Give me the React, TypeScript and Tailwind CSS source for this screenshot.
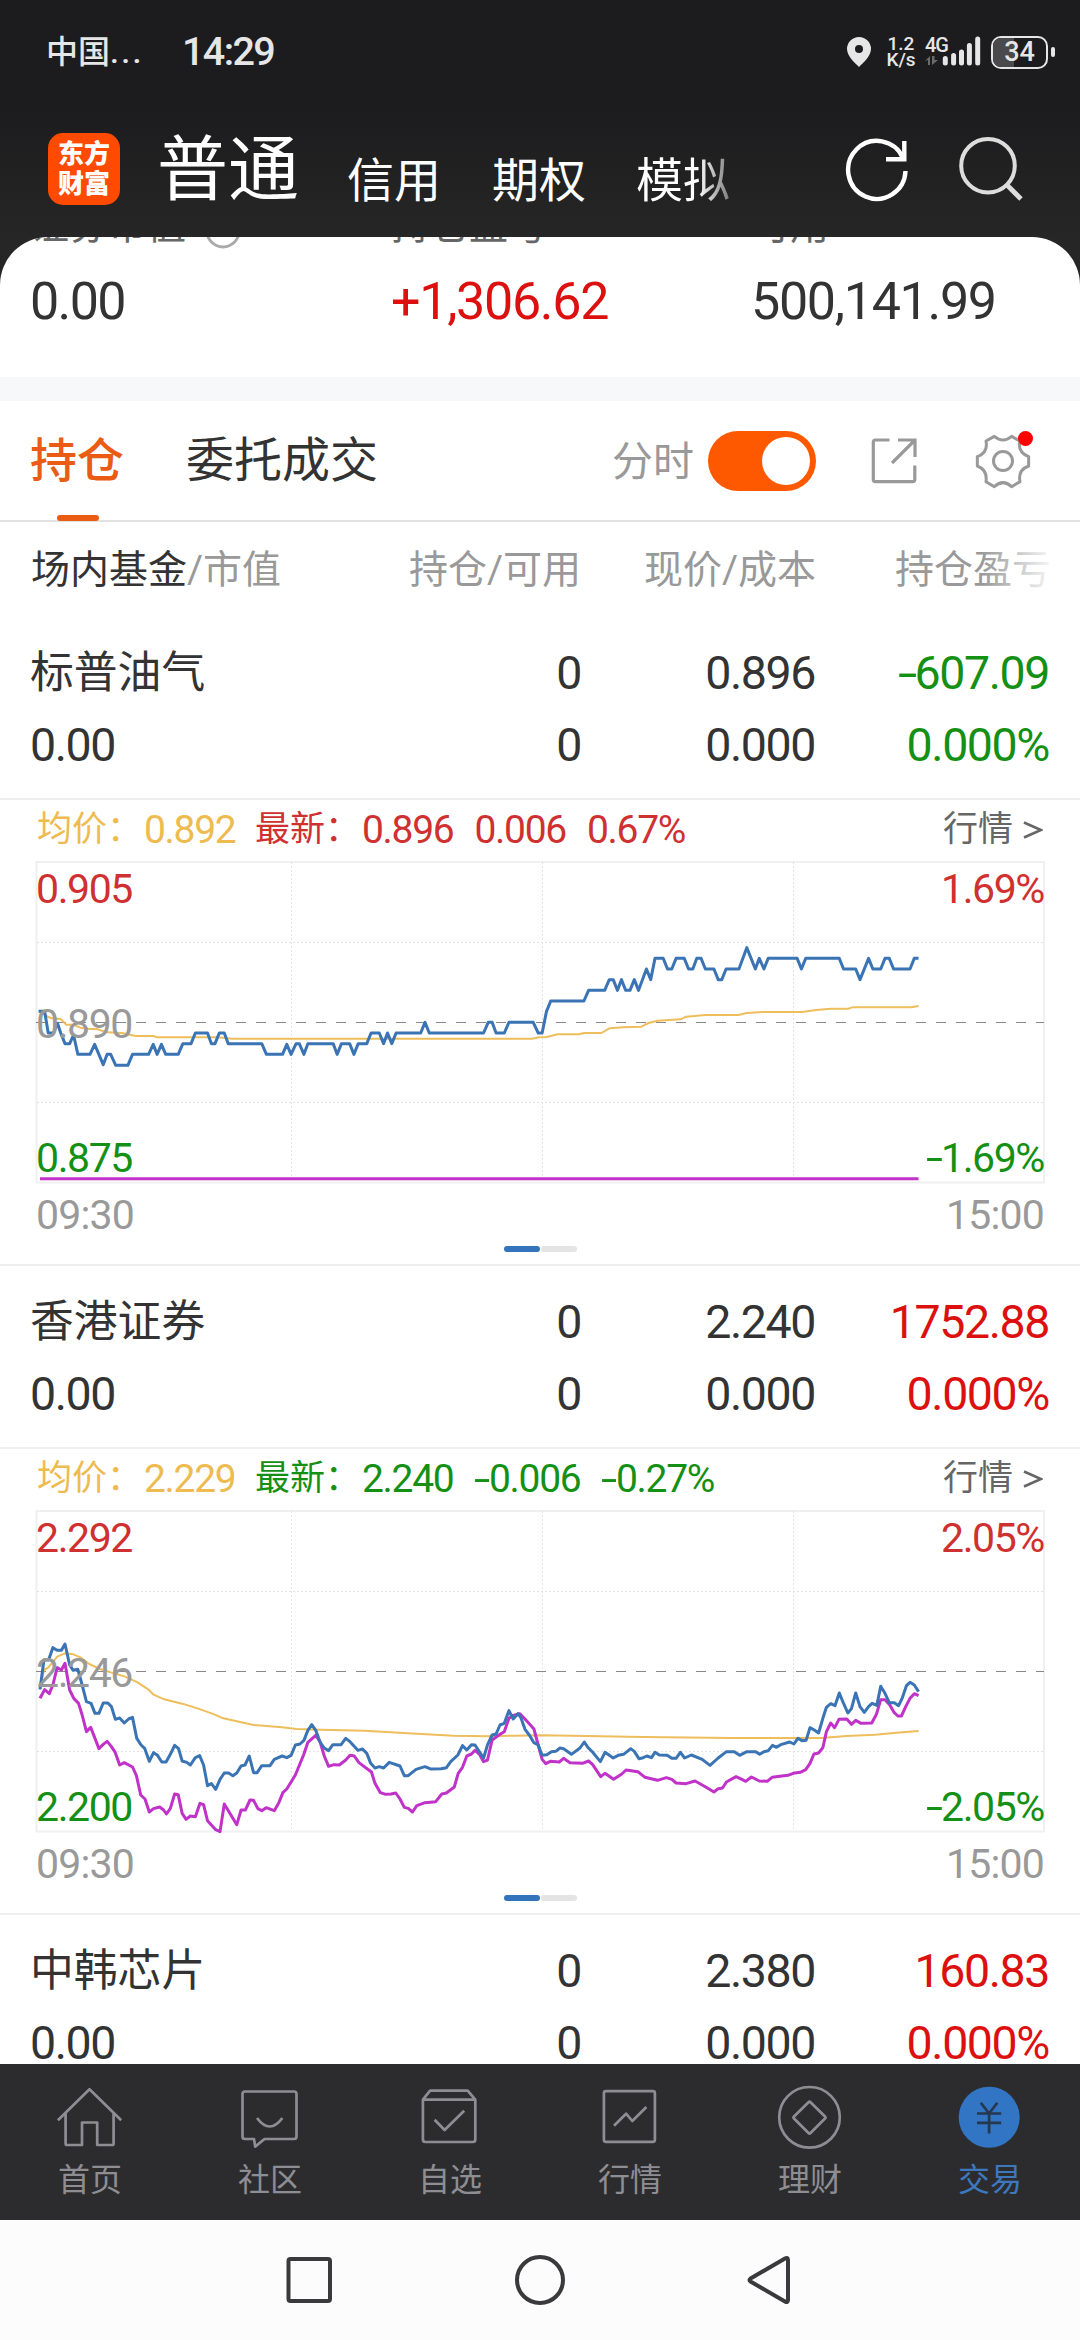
import React from "react";

type Series = { price: string; average: string; index: string };

const SERIES_A: Series = {
  price:
    "108,514 125,514 135,579 150,579 161,550 170,579 182,611 195,611 206,585 218,643 252,643 265,613 289,674 300,643 310,643 324,676 358,676 371,643 416,643 429,613 440,643 452,613 464,643 499,643 512,611 535,611 547,579 581,579 592,611 602,611 614,579 628,579 639,611 733,611 746,643 791,643 803,613 815,643 829,611 838,611 851,643 862,611 933,611 944,643 956,611 979,611 991,643 1003,611 1027,611 1039,579 1062,579 1074,611 1085,579 1097,611 1109,579 1178,579 1190,547 1202,579 1354,579 1367,547 1378,547 1389,579 1412,579 1425,547 1493,547 1507,579 1518,579 1530,515 1542,483 1635,483 1648,451 1693,451 1706,419 1717,419 1729,451 1740,419 1752,451 1764,451 1776,419 1788,451 1810,387 1822,419 1834,355 1857,355 1869,387 1881,387 1893,355 1916,355 1928,387 1940,387 1951,355 1963,355 1975,387 1999,387 2011,419 2021,419 2033,387 2069,387 2091,323 2115,387 2126,355 2139,387 2151,355 2232,355 2244,387 2256,355 2350,355 2362,387 2396,387 2408,419 2432,355 2444,387 2466,387 2478,355 2490,355 2502,387 2548,387 2560,355 2572,355",
  average:
    "112,514 130,528 145,535 170,537 185,554 205,554 225,563 250,567 270,567 300,577 340,579 380,588 430,588 440,592 610,592 650,596 1490,596 1510,592 1531,591 1561,583 1621,583 1636,579 1684,579 1706,565 1746,562 1796,560 1816,549 1841,542 1906,538 1921,530 1976,525 2068,525 2091,519 2136,516 2246,516 2286,510 2326,506 2376,506 2386,502 2551,502 2572,498",
  index: "112,1016 2572,1016",
};

const SERIES_B: Series = {
  price:
    "112,601 123,513 136,513 148,476 160,484 172,484 182,465 195,528 205,544 218,541 230,588 242,638 255,643 266,673 277,673 289,642 302,642 312,653 323,691 335,687 348,702 360,690 371,685 383,748 395,768 405,778 418,817 430,791 441,799 453,819 465,819 477,796 489,769 500,779 510,816 523,820 533,828 547,806 559,800 570,828 581,890 592,884 604,901 616,871 628,852 640,852 652,860 663,852 675,831 686,828 698,801 710,851 720,851 733,830 756,830 768,811 790,801 803,806 815,799 827,768 840,765 851,754 862,724 873,707 884,724 896,759 908,777 920,785 932,767 955,767 968,748 980,758 1002,784 1015,780 1027,793 1038,823 1050,837 1062,833 1074,837 1090,820 1120,831 1132,860 1143,860 1165,841 1190,833 1205,840 1235,839 1250,836 1262,818 1282,798 1295,770 1307,783 1320,767 1330,768 1342,788 1354,807 1365,768 1378,738 1389,735 1400,708 1412,703 1425,665 1437,690 1450,674 1458,685 1470,721 1482,738 1495,761 1507,768 1518,799 1531,797 1544,788 1556,787 1568,777 1578,779 1600,796 1624,777 1636,759 1646,775 1659,789 1681,818 1694,790 1717,807 1731,799 1746,796 1766,779 1776,787 1789,809 1801,806 1811,801 1824,806 1834,790 1846,798 1868,799 1881,808 1893,808 1905,790 1917,807 1936,798 1966,811 1988,829 2011,807 2034,788 2056,788 2071,799 2091,788 2116,788 2127,796 2139,788 2151,785 2163,769 2174,775 2186,767 2211,759 2223,765 2234,748 2246,755 2257,754 2268,716 2280,723 2292,732 2304,688 2314,655 2326,644 2338,650 2350,612 2361,641 2374,672 2384,659 2396,612 2408,653 2420,670 2432,653 2442,643 2455,649 2466,592 2478,613 2490,641 2504,641 2516,650 2526,628 2538,590 2548,580 2560,588 2572,608",
  average:
    "112,601 123,543 135,536 145,523 160,503 182,493 205,496 225,505 250,525 280,540 310,550 350,563 385,580 415,601 430,617 460,631 510,644 555,659 600,676 625,688 710,708 790,715 830,720 900,722 1020,725 1130,732 1270,740 1360,742 1440,740 1518,739 1640,741 1800,744 2050,747 2300,747 2370,741 2450,737 2510,731 2572,726",
  index:
    "112,628 125,602 138,614 148,588 160,536 172,543 182,523 195,603 207,629 220,643 230,678 242,728 254,715 266,748 277,779 289,766 300,757 312,773 323,791 335,828 348,821 371,834 382,860 394,918 406,930 418,969 430,959 447,954 458,963 466,975 477,958 489,915 499,917 510,973 521,991 533,981 547,983 560,943 570,947 581,995 604,1022 616,1028 628,945 663,1007 675,963 687,963 700,933 710,934 722,959 733,965 745,956 768,965 780,943 792,911 803,900 827,858 850,798 862,760 884,739 896,758 908,801 920,832 935,827 950,828 968,813 980,799 992,801 1005,821 1040,849 1050,883 1065,911 1080,916 1095,915 1108,912 1120,930 1132,955 1143,958 1155,969 1167,950 1190,941 1220,938 1237,915 1250,912 1272,894 1283,853 1295,835 1307,801 1320,795 1330,784 1342,795 1354,818 1365,813 1378,753 1400,736 1412,728 1425,688 1437,679 1455,674 1470,690 1495,720 1507,768 1518,811 1528,824 1541,817 1566,819 1578,808 1596,821 1631,823 1648,816 1659,826 1682,863 1694,853 1718,871 1741,855 1753,843 1786,848 1806,865 1841,874 1866,866 1881,871 1893,882 1921,884 1946,876 1976,894 1999,909 2011,899 2023,897 2034,879 2061,863 2073,869 2088,877 2104,864 2126,876 2148,877 2162,865 2206,859 2221,853 2241,850 2256,842 2268,823 2279,795 2292,792 2304,776 2314,728 2326,702 2337,716 2349,691 2371,690 2384,706 2396,694 2411,703 2441,702 2454,676 2466,632 2478,632 2491,647 2504,671 2514,681 2524,681 2536,653 2548,628 2560,614 2572,620",
};

function Line({ points, color, width }: { points: string; color: string; width: number }) {
  return (
    <polyline
      points={points}
      fill="none"
      stroke={color}
      strokeWidth={width}
      strokeLinejoin="round"
      vectorEffect="non-scaling-stroke"
    />
  );
}

/* A signed figure; the minus sign is widened so that it reads clearly beside the digits. */
function Num({ children }: { children: string }) {
  if (!children.startsWith("-")) return <span>{children}</span>;
  return (
    <span>
      <span className="mr-[5px] inline-block origin-left scale-x-150">-</span>
      {children.slice(1)}
    </span>
  );
}

function StatusBar() {
  return (
    <div className="flex h-[104px] items-center justify-between pl-[46px] pr-[25px] text-[#e6e6e6]">
      <div className="flex items-center">
        <span className="w-[136px] text-[32px] font-medium leading-none">
          中国<span className="tracking-[2.4px]">...</span>
        </span>
        <span className="text-[39.500px] font-medium leading-none tracking-[-1.6px]">14:29</span>
      </div>
      <div className="flex items-center">
        <svg width="24" height="30" viewBox="0 0 24 30" fill="#e6e6e6">
          <path fillRule="evenodd" d="M12 0a12 12 0 0 1 12 12c0 7-8 14-12 18C8 26 0 19 0 12A12 12 0 0 1 12 0zm0 8a4 4 0 1 0 0 8 4 4 0 0 0 0-8z" />
        </svg>
        <div className="ml-[15px] flex w-[30px] flex-col items-center text-[19px] font-medium leading-[16px]">
          <span>1.2</span>
          <span>K/s</span>
        </div>
        <div className="relative ml-[9px] h-[34px] w-[56px]">
          <span className="absolute left-0 top-0 text-[20px] font-medium leading-[20px] tracking-[-1px]">4G</span>
          <svg className="absolute left-0 top-0" width="56" height="34" viewBox="0 0 56 34">
            <path d="M0 26l5-5v9H3v-5zM7 21v9l6-5H9.500v-4z" fill="#6b6b6b" />
            <g stroke="#e6e6e6" strokeWidth="5" strokeLinecap="round">
              <path d="M20.300 23.500V28M28.600 20.500V28M36.500 17V28M44.400 10.500V28M52.700 4V28" />
            </g>
          </svg>
        </div>
        <div className="relative ml-[10px] flex h-[33px] w-[57px] items-center justify-center overflow-hidden rounded-[10px] border-2 border-[#e6e6e6]">
          <div className="absolute inset-y-0 left-0 w-[21px] bg-[#4a4a4c]" />
          <span className="relative text-[27px] font-medium leading-none">34</span>
        </div>
        <div className="ml-[3px] h-[10px] w-1 rounded-full bg-[#e6e6e6]" />
      </div>
    </div>
  );
}

function TitleBar() {
  return (
    <div className="flex h-[133px] items-start pl-12 text-white">
      <div className="mt-[29px] flex h-[72px] w-[72px] flex-col items-center justify-center rounded-[15px] bg-[#ff4a00] text-[26px] font-black leading-[30px]">
        <span>东方</span>
        <span>财富</span>
      </div>
      <span className="ml-[37px] mt-[30px] w-[190px] text-[71px] leading-[72px]">普通</span>
      <span className="mt-[53px] w-[145px] text-[47px] leading-[48px]">信用</span>
      <span className="mt-[53px] w-[144px] text-[47px] leading-[48px]">期权</span>
      <span className="mt-[53px] w-[207px] bg-gradient-to-r from-white from-[30%] to-[#777777] to-[46%] bg-clip-text text-[47px] leading-[48px] text-transparent">
        模拟
      </span>
      <svg className="mt-[32px]" width="68" height="68" viewBox="842 136 68 68" fill="none" stroke="#ffffff" strokeWidth="4.400">
        <path d="M904.500 171A28.700 29 0 1 1 902 158M903.300 141V159.300H885" />
      </svg>
      <svg className="ml-[46px] mt-[30px]" width="68" height="68" viewBox="956 134 68 68" fill="none" stroke="#dddddd" strokeWidth="4">
        <circle cx="987" cy="165.700" r="26.800" />
        <path d="M1005.500 184.500l14.500 14.500" strokeWidth="4.800" />
      </svg>
    </div>
  );
}

function Summary() {
  return (
    <div className="flex h-[140px] shrink-0 pl-[30px]">
      <div className="w-[361px]">
        <div className="-mt-[31px] flex h-10 items-center text-[39px] leading-10 text-[#666666]">
          证券市值
          <svg className="ml-[19px] mt-[10px]" width="36" height="36" viewBox="0 0 36 36" fill="none" stroke="#aaaaaa" strokeWidth="3">
            <circle cx="18" cy="18" r="16" />
            <path d="M18 9v13" />
          </svg>
        </div>
        <div className="mt-[32px] text-[52px] leading-[48px] tracking-[-1.6px]">0.00</div>
      </div>
      <div className="w-[360px]">
        <div className="-mt-[31px] flex h-10 items-center text-[39px] leading-10 text-[#666666]">
          持仓盈亏
          <svg className="ml-[8px]" width="12" height="24" viewBox="0 0 12 24" fill="none" stroke="#999999" strokeWidth="3">
            <path d="M1 2l9 10-9 10" />
          </svg>
        </div>
        <div className="mt-[32px] text-[52px] leading-[48px] tracking-[-1.3px] text-[#dd1010]">+1,306.62</div>
      </div>
      <div>
        <div className="-mt-[31px] h-10 text-[39px] leading-10 text-[#666666]">可用</div>
        <div className="mt-[32px] text-[52px] leading-[48px] tracking-[-1.3px]">500,141.99</div>
      </div>
    </div>
  );
}

function Toolbar() {
  return (
    <div className="flex h-[121px] shrink-0 items-start border-b-2 border-[#e2e2e2] pl-[30px]">
      <div className="flex h-[120px] w-[156px] flex-col">
        <span className="mt-[36px] h-[78px] text-[47px] font-medium leading-[48px] text-[#ea5b14]">持仓</span>
        <span className="ml-[27px] h-[6px] w-[42px] rounded-full bg-[#ea5b14]" />
      </div>
      <span className="mt-[36px] w-[426px] text-[48px] leading-[48px]">委托成交</span>
      <span className="mt-[37px] w-[96px] text-[41px] leading-[48px] text-[#999999]">分时</span>
      <div className="mt-[30px] flex h-[60px] w-[108px] items-center justify-end rounded-full bg-[#ff5900] pr-[6px]">
        <div className="h-12 w-12 rounded-full bg-white" />
      </div>
      <svg className="ml-[54px] mt-[34px]" width="50" height="52" viewBox="870 435 50 52" fill="none" stroke="#999999" strokeWidth="3.200">
        <path d="M889.500 440H875.500Q873.300 440 873.300 442.200V479.500Q873.300 481.700 875.500 481.700H912.500Q914.800 481.700 914.800 479.500V465.500" />
        <path d="M898 440H915V457M915 440L892 463" />
      </svg>
      <div className="relative ml-[53px] mt-[30px]">
        <svg width="60" height="60" viewBox="1116 93 180 180" fill="none" stroke="#999999" strokeWidth="9" strokeLinejoin="round">
          <path d="M1180 109Q1206 131 1232 109L1256 123Q1250 158 1283 170V198Q1250 210 1257 245L1232 260Q1206 236 1180 260L1155 245Q1160 210 1129 198V170Q1162 158 1155 123Z" />
          <circle cx="1206" cy="183" r="28.500" />
        </svg>
        <div className="absolute right-0 top-0 h-[15px] w-[15px] rounded-full bg-[#ff0000]" />
      </div>
    </div>
  );
}

function TableHead() {
  return (
    <div className="relative flex h-[95px] shrink-0 items-center whitespace-nowrap pl-[31px] pt-px text-[39px] text-[#999999]">
      <div className="w-[315px]">
        <span className="text-[#333333]">场内基金</span>/市值
      </div>
      <div className="w-[235px] text-right">持仓/可用</div>
      <div className="w-[235px] text-right">现价/成本</div>
      <div className="w-[235px] text-right">持仓盈亏</div>
      <div className="absolute inset-y-0 right-[30px] w-[68px] bg-gradient-to-r from-white/0 to-white/90" />
    </div>
  );
}

type Cell = { name: string; price: string; profit: string; up: boolean };

function Holding({ name, price, profit, up }: Cell) {
  const tone = up ? "w-[234px] text-right text-[#dd1010]" : "w-[234px] text-right text-[#149014]";
  return (
    <div className="flex h-[181px] shrink-0 flex-col pl-[30px] pt-[20px] text-[46.500px] leading-[72px] tracking-[-1.4px]">
      <div className="flex h-[72px]">
        <div className="w-[431px] text-[43.800px] tracking-normal">{name}</div>
        <div className="w-[120px] text-right">0</div>
        <div className="w-[234px] text-right">{price}</div>
        <div className={tone}>
          <Num>{profit}</Num>
        </div>
      </div>
      <div className="flex h-[72px]">
        <div className="w-[431px]">0.00</div>
        <div className="w-[120px] text-right">0</div>
        <div className="w-[234px] text-right">0.000</div>
        <div className={tone}>0.000%</div>
      </div>
    </div>
  );
}

type PanelProps = {
  average: string;
  latest: string[];
  up: boolean;
  high: string;
  middle: string;
  low: string;
  percent: string;
  series: Series;
};

function ChartPanel({ average, latest, up, high, middle, low, percent, series }: PanelProps) {
  const tone = up ? "flex gap-[21px] text-[#cf3030]" : "flex gap-[21px] text-[#149014]";
  const labelTone = up ? "w-[107px] text-[35px] tracking-normal text-[#cf3030]" : "w-[107px] text-[35px] tracking-normal text-[#149014]";
  return (
    <div className="h-[468px] shrink-0 border-y-2 border-[#eeeeee]">
      <div className="flex h-[60px] items-center pl-[37px] pr-[37px] text-[39px] tracking-[-1.3px]">
        <span className="w-[107px] text-[35px] tracking-normal text-[#eebb50]">均价：</span>
        <span className="w-[111px] text-[#eebb50]">{average}</span>
        <span className={labelTone}>最新：</span>
        <div className={tone}>
          {latest.map((v) => (
            <Num key={v}>{v}</Num>
          ))}
        </div>
        <span className="ml-auto flex items-center gap-[10px] text-[35px] tracking-normal text-[#666666]">
          行情
          <svg width="20" height="20" viewBox="0 0 20 20" fill="none" stroke="#666666" strokeWidth="2.600">
            <path d="M1 2.500L18 10L1 17.500" />
          </svg>
        </span>
      </div>
      <div className="relative h-[325px]">
        <svg className="block" width="1080" height="325" viewBox="0 0 1080 325" fill="none">
          <rect x="36.500" y="2" width="1007.500" height="320.500" stroke="#f0f0f0" strokeWidth="2" />
          <path d="M37 82.500H1044M37 242.500H1044M291.500 2V322M542.500 2V322M793.500 2V322" stroke="#e3e3e3" strokeWidth="1" strokeDasharray="2 2" />
          <path d="M36 162.500H1044" stroke="#888888" strokeWidth="1.200" strokeDasharray="10 10" />
          <g transform="translate(0 -20) scale(0.357143 0.333333)">
            <Line points={series.average} color="#eebd5c" width={2} />
            <Line points={series.index} color="#c032c8" width={3} />
            <Line points={series.price} color="#3a74b4" width={3} />
          </g>
        </svg>
        <div className="absolute inset-0 flex flex-col justify-between px-[36px] text-[41px] leading-[48px] tracking-[-1.4px]">
          <div className="flex justify-between pt-[5px]">
            <span className="text-[#cf3030]">{high}</span>
            <span className="text-[#cf3030]">{percent}</span>
          </div>
          <div className="text-[#999999]">{middle}</div>
          <div className="flex justify-between pb-[3px] text-[#149014]">
            <span>{low}</span>
            <Num>{"-" + percent}</Num>
          </div>
        </div>
      </div>
      <div className="flex h-[61px] items-center justify-between px-[36px] text-[41px] tracking-[-0.8px] text-[#999999]">
        <span>09:30</span>
        <span>15:00</span>
      </div>
      <div className="flex justify-center gap-px">
        <div className="h-[6px] w-9 rounded-full bg-[#3474bc]" />
        <div className="h-[6px] w-9 rounded-full bg-[#e4e4e4]" />
      </div>
    </div>
  );
}

function Tab({ label, active, children }: { label: string; active?: boolean; children: React.ReactNode }) {
  return (
    <div className={active ? "flex w-[180px] flex-col items-center text-[#3d78bf]" : "flex w-[180px] flex-col items-center text-[#8e8e92]"}>
      <svg className="mt-[20px]" width="66" height="66" viewBox="0 0 66 66" fill="none" stroke="currentColor" strokeWidth="2.700" strokeLinejoin="round">
        {children}
      </svg>
      <span className="mt-[10px] text-[32px] leading-[40px]">{label}</span>
    </div>
  );
}

function TabBar() {
  return (
    <div className="flex h-[156px] shrink-0 bg-[#2c2c2e]">
      <Tab label="首页">
        <path d="M0.900 36.300L32.500 5.200L64.200 36.300M8.600 29.500V59.500Q8.600 61 10 61H25V38.500H40.200V61H55Q56.600 61 56.600 59.500V29.500" />
      </Tab>
      <Tab label="社区">
        <path d="M8 7.500H57Q59.500 7.500 59.500 10V52.500Q59.500 55 57 55H27.500L18.200 62.600L17 55H8Q5.500 55 5.500 52.500V10Q5.500 7.500 8 7.500ZM20 34Q32.700 51 45.400 34" />
      </Tab>
      <Tab label="自选">
        <path d="M5.900 15.700H58.300V55.500Q58.300 58 55.800 58H8.400Q5.900 58 5.900 55.500ZM5.900 15.700L13.100 6.700H50.700L58.300 15.700M17.600 35.700L27.600 46L47.200 26.700" />
      </Tab>
      <Tab label="行情">
        <rect x="6.900" y="7.200" width="51" height="50.600" rx="2" />
        <path d="M17 41.700L29.100 29.700L35.300 37L49.400 23" />
      </Tab>
      <Tab label="理财">
        <circle cx="32.500" cy="33.300" r="30.300" />
        <path d="M31.500 18.200Q32.500 17.200 33.500 18.200L48 32.500Q49 33.500 48 34.500L33.500 49Q32.500 50 31.500 49L17 34.500Q16 33.500 17 32.500Z" />
      </Tab>
      <Tab label="交易" active>
        <circle cx="32.200" cy="33.300" r="30.500" fill="#3175c4" stroke="none" />
        <path d="M23.800 18.700L32.100 29.500L40.300 18.700M32.100 29.500V49.500M20 29.500H44.200M20 38.800H44.200" stroke="#26384e" />
      </Tab>
    </div>
  );
}

function SystemBar() {
  return (
    <div className="flex h-[120px] shrink-0 items-center justify-center bg-[#fcfcfc]">
      <svg width="520" height="60" viewBox="280 2250 520 60" fill="none" stroke="#3a3a3c" strokeWidth="4">
        <rect x="288.500" y="2259" width="41.500" height="42" rx="2" />
        <circle cx="540" cy="2280" r="23" />
        <path d="M750.500 2278.500L785 2258.500Q788 2256.800 788 2260V2300Q788 2303.200 785 2301.500L750.500 2281.500Q748.500 2280 750.500 2278.500Z" />
      </svg>
    </div>
  );
}

export default function App() {
  return (
    <div className="flex h-[2340px] w-[1080px] flex-col overflow-hidden bg-[#262626] font-[Roboto,'Noto_Sans_CJK_SC',sans-serif] text-[#333333]">
      <header className="h-[237px] shrink-0 bg-gradient-to-b from-[#1c1c1e] from-45% to-[#262626]">
        <StatusBar />
        <TitleBar />
      </header>
      <main className="flex h-[1827px] shrink-0 flex-col overflow-hidden rounded-t-[48px] bg-white">
        <Summary />
        <div className="h-6 shrink-0 bg-[#f7f8fa]" />
        <Toolbar />
        <TableHead />
        <Holding name="标普油气" price="0.896" profit="-607.09" up={false} />
        <ChartPanel
          average="0.892"
          latest={["0.896", "0.006", "0.67%"]}
          up
          high="0.905"
          middle="0.890"
          low="0.875"
          percent="1.69%"
          series={SERIES_A}
        />
        <Holding name="香港证券" price="2.240" profit="1752.88" up />
        <ChartPanel
          average="2.229"
          latest={["2.240", "-0.006", "-0.27%"]}
          up={false}
          high="2.292"
          middle="2.246"
          low="2.200"
          percent="2.05%"
          series={SERIES_B}
        />
        <Holding name="中韩芯片" price="2.380" profit="160.83" up />
      </main>
      <TabBar />
      <SystemBar />
    </div>
  );
}
